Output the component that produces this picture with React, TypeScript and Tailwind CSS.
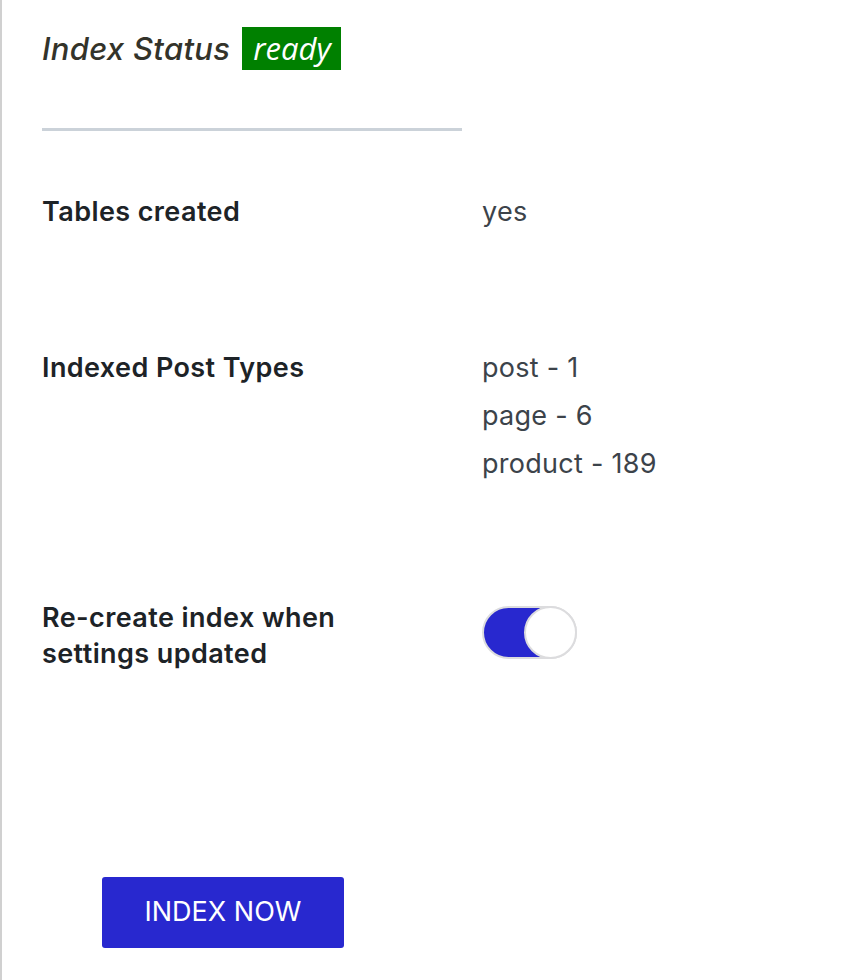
const postTypes = [
  { name: "post", count: 1 },
  { name: "page", count: 6 },
  { name: "product", count: 189 },
];

const App = () => {
  return (
    <div className="min-h-[980px] w-[860px] bg-white border-l-2 border-[#d0d0d0] font-['Inter',sans-serif]">
      <div className="pl-10 pt-[27px]">
        {/* Heading */}
        <div className="flex items-center gap-[12px]">
          <h2 className="italic font-medium text-[31px] leading-[43px] tracking-[0.01em] text-[#33332a]">
            Index Status
          </h2>
          <span className="bg-[#008000] text-white italic font-medium font-['Open_Sans',sans-serif] text-[31px] leading-[43px] h-[43px] pl-[11px] pr-[10px]">
            ready
          </span>
        </div>
        <hr className="mt-[58px] w-[420px] border-0 h-[3px] bg-[#cbd2d9]" />

        {/* Rows */}
        <div className="mt-[63px] flex flex-row">
          <div className="w-[440px] font-semibold text-[27px] leading-[36px] tracking-[0.015em] text-[#1d2327]">
            Tables created
          </div>
          <div className="text-[27px] leading-[36px] tracking-[0.01em] text-[#3c434a]">yes</div>
        </div>

        <div className="mt-[120px] flex flex-row">
          <div className="w-[440px] font-semibold text-[27px] leading-[36px] tracking-[0.015em] text-[#1d2327]">
            Indexed Post Types
          </div>
          <div className="flex flex-col gap-[12px] text-[27px] leading-[36px] tracking-[0.01em] text-[#3c434a]">
            {postTypes.map((p) => (
              <div key={p.name}>
                {p.name} - {p.count}
              </div>
            ))}
          </div>
        </div>

        <div className="mt-[118px] flex flex-row">
          <div className="w-[440px] font-semibold text-[27px] leading-[36px] tracking-[0.015em] text-[#1d2327]">
            Re-create index when
            <br />
            settings updated
          </div>
          <button className="relative mt-[6px] w-[95px] h-[53px] rounded-full bg-[#2828cf] border-2 border-[#dcdcde]">
            <span className="absolute right-[-2px] top-[-2px] w-[53px] h-[53px] rounded-full bg-white border-2 border-[#dcdcde]" />
          </button>
        </div>

        {/* Action */}
        <div className="mt-[205px] pl-[60px]">
          <button className="w-[242px] h-[71px] rounded-[3px] bg-[#2828cf] text-white text-[27px]">
            INDEX NOW
          </button>
        </div>
      </div>
    </div>
  );
};

export default App;
